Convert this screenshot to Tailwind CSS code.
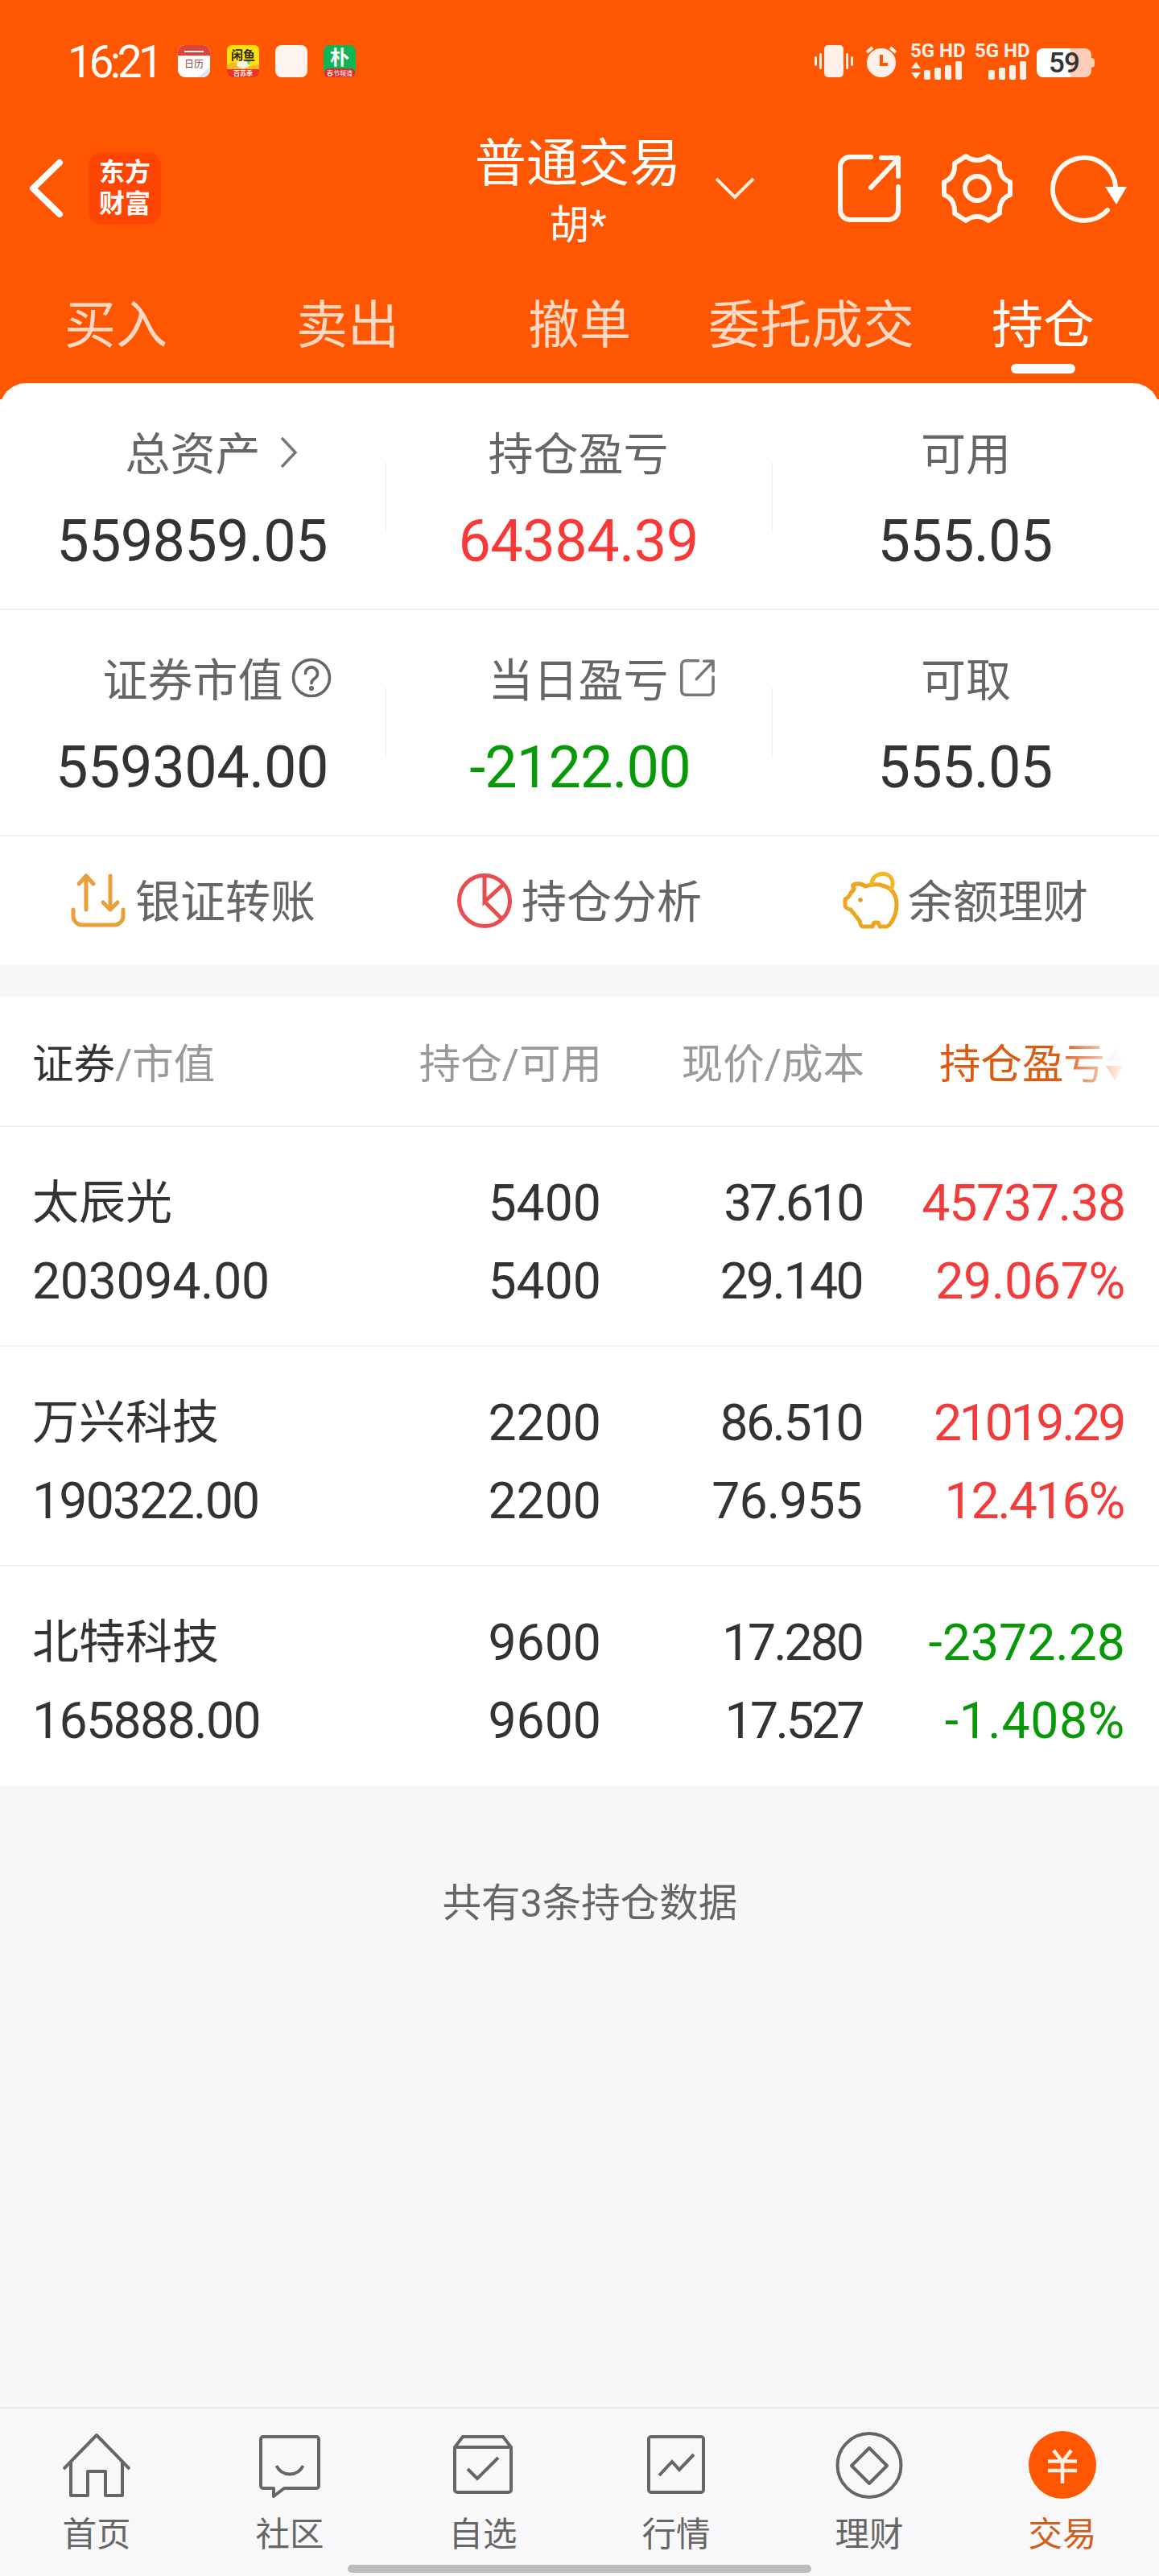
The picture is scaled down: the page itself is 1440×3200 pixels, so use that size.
<!DOCTYPE html>
<html lang="zh-CN">
  <head>
    <meta charset="UTF-8" />
    <meta name="viewport" content="width=device-width, initial-scale=1.0" />
    <title>普通交易 - 持仓</title>
    <script src="https://cdn.jsdelivr.net/npm/@tailwindcss/browser@4"></script>
  </head>
  <body class="bg-[#f6f7f9]">
    <div class="w-[1440px] h-[3200px] flex flex-col overflow-hidden font-['Roboto','Noto_Sans_CJK_SC',sans-serif] text-[#333]">

      <!-- 顶部 -->
      <header class="h-[496px] shrink-0 bg-[#ff5602] text-white">
        <!-- 状态栏 -->
        <div class="h-[152px] pl-[84px] pr-[80px] flex items-center">
          <div class="w-[137px] pt-[2px] text-[55px] leading-none tracking-[-4.5px]">16:21</div>
          <svg class="w-10 h-10" viewBox="0 0 40 40">
            <rect width="40" height="40" rx="9" fill="#fff" />
            <path d="M0 13V9a9 9 0 0 1 9-9h22a9 9 0 0 1 9 9v4z" fill="#dc4437" />
            <path d="M8 8h24" stroke="#fff" stroke-width="2" />
            <path d="M40 27v4a9 9 0 0 1-9 9h-6z" fill="#dfe5f1" />
            <text x="20" y="28" font-size="12" text-anchor="middle" fill="#8a4040" font-family="Noto Sans CJK SC">日历</text>
          </svg>
          <svg class="w-10 h-10 ml-[21px] overflow-visible" viewBox="0 0 40 40">
            <rect width="40" height="40" rx="6" fill="#fde010" />
            <path d="M0 24q10-5 20 0t20-1v8H0z" fill="#f7b52c" />
            <ellipse cx="20" cy="24" rx="8" ry="5" fill="#fff3d8" />
            <path d="M24 19l5 1-2 5z" fill="#46c99a" />
            <path d="M0 30h40v4a6 6 0 0 1-6 6H6a6 6 0 0 1-6-6z" fill="#ee3420" />
            <text x="20" y="18" font-size="15" font-weight="700" text-anchor="middle" fill="#2b2810" font-family="Noto Sans CJK SC">闲鱼</text>
            <text x="20" y="38" font-size="8" font-weight="700" text-anchor="middle" fill="#fff" font-family="Noto Sans CJK SC">百苏季</text>
          </svg>
          <div class="w-10 h-10 ml-5 rounded-[8px] bg-[#fff3ee]"></div>
          <svg class="w-10 h-10 ml-5 overflow-visible" viewBox="0 0 40 40">
            <rect width="40" height="40" rx="8" fill="#0fb457" />
            <rect x="1" y="29" width="38" height="11" rx="5" fill="#dc2b2b" />
            <text x="20" y="24" font-size="24" font-weight="700" text-anchor="middle" fill="#fff" font-family="Noto Sans CJK SC">朴</text>
            <text x="20" y="38" font-size="8" text-anchor="middle" fill="#fff" font-family="Noto Sans CJK SC">春节频道</text>
          </svg>

          <svg class="ml-auto w-12 h-10" viewBox="0 0 48 40" fill="#fff0e8">
            <rect x="12" width="24" height="40" rx="5" />
            <rect x="0" y="14" width="3" height="12" rx="1.5" /><rect x="6" y="10" width="3" height="20" rx="1.5" />
            <rect x="39" y="10" width="3" height="20" rx="1.5" /><rect x="45" y="14" width="3" height="12" rx="1.5" />
          </svg>
          <svg class="ml-[15px] w-10 h-10" viewBox="0 0 40 40">
            <circle cx="20" cy="22" r="18" fill="#fff0e8" />
            <path d="M2 9l7-6M38 9l-7-6" stroke="#fff0e8" stroke-width="4" />
            <path d="M20 12v12h8" fill="none" stroke="#ff5602" stroke-width="4" />
          </svg>
          <div class="ml-4 w-[65px] h-[46px] flex flex-col justify-between">
            <div class="text-[24px] leading-[20px] font-bold whitespace-pre text-[#fff0e8]">5G HD</div>
            <svg class="w-[65px] h-[23px]" viewBox="0 0 65 23" fill="#fff0e8">
              <path d="M1 9l6-8 6 8zM1 14h12l-6 8z" />
              <rect x="17" y="11" width="8" height="12" rx="2" /><rect x="30" y="8" width="8" height="15" rx="2" />
              <rect x="43" y="5" width="8" height="18" rx="2" /><rect x="56" y="0" width="8" height="23" rx="2" />
            </svg>
          </div>
          <div class="ml-[15px] w-[65px] h-[46px] flex flex-col justify-between">
            <div class="text-[24px] leading-[20px] font-bold whitespace-pre text-[#fff0e8]">5G HD</div>
            <svg class="w-[65px] h-[23px]" viewBox="0 0 65 23" fill="#fff0e8">
              <rect x="17" y="11" width="8" height="12" rx="2" /><rect x="30" y="8" width="8" height="15" rx="2" />
              <rect x="43" y="5" width="8" height="18" rx="2" /><rect x="56" y="0" width="8" height="23" rx="2" />
            </svg>
          </div>
          <div class="ml-3 mt-1 flex items-center">
            <div class="w-[68px] h-9 rounded-[8px] bg-linear-to-r from-white from-[62%] to-[#ffccb5] to-[62%] text-[#333] text-[35px] font-medium tracking-[-1px] leading-[37px] text-center">59</div>
            <div class="w-1 h-3 rounded-r bg-[#ffccb5]"></div>
          </div>
        </div>

        <!-- 标题栏 -->
        <div class="h-[180px] pl-[34px] pr-[38px] flex items-center">
          <div class="w-[556px] flex items-center gap-[30px] pb-[16px]">
            <svg class="w-[46px] h-[76px]" viewBox="0 0 46 76" fill="none" stroke="#fff" stroke-width="8" stroke-linecap="round" stroke-linejoin="round"><path d="M40 6L7 38l33 32" /></svg>
            <div class="w-[90px] h-[90px] rounded-[16px] bg-[#ff4503] flex flex-col items-center justify-center text-[32px] leading-[39px] font-bold">
              <span>东方</span><span>财富</span>
            </div>
          </div>
          <div class="w-[256px] flex flex-col items-center whitespace-nowrap">
            <div class="text-[64px] leading-[72px]">普通交易</div>
            <div class="text-[50px] leading-[72px] mt-1">胡*</div>
          </div>
          <div class="ml-auto flex items-center pb-[16px]">
            <svg class="w-[50px] h-[30px]" viewBox="0 0 50 30" fill="none" stroke="#fff0e0" stroke-width="4"><path d="M1 3l23 23L47 3" /></svg>
            <svg class="ml-[101px] w-[82px] h-[88px]" viewBox="0 0 82 88" fill="none" stroke="#fff8f0" stroke-width="6" stroke-linecap="round" stroke-linejoin="round">
              <path d="M42 5H16A12 12 0 0 0 4 17v54a12 12 0 0 0 12 12h48a12 12 0 0 0 12-12V42" />
              <path d="M55 6h21v23M75 8L42 43" />
            </svg>
            <svg class="ml-[47px] w-[90px] h-[88px]" viewBox="0 0 90 88" fill="none" stroke="#fff8f0" stroke-width="6" stroke-linejoin="round">
              <path d="M31 4q14 10 28 0l14 9q-1 18 13 23v16q-14 5-13 23l-14 9q-14-10-28 0l-14-9q1-18-13-23V36q14-5 13-23z" />
              <circle cx="45" cy="44" r="15" />
            </svg>
            <svg class="ml-[45px] w-[98px] h-[88px]" viewBox="0 0 98 88">
              <path d="M72 71A39 39 0 1 1 82 44" fill="none" stroke="#fff8f0" stroke-width="6" stroke-linecap="round" />
              <path d="M69 42h27L83 64z" fill="#fff" />
            </svg>
          </div>
        </div>

        <!-- 标签 -->
        <nav class="grid grid-cols-5 text-center text-[64px] leading-[80px] text-[#ffd9c4] pt-[33px]">
          <div>买入</div>
          <div>卖出</div>
          <div>撤单</div>
          <div>委托成交</div>
          <div class="text-white flex flex-col items-center">持仓<span class="mt-[7px] w-20 h-3 rounded-full bg-white"></span></div>
        </nav>
      </header>

      <!-- 资产汇总 -->
      <section class="-mt-5 shrink-0 bg-white rounded-t-[32px]">
        <div class="h-[282px] flex border-b-2 border-[#f0f0f0] text-center">
          <div class="w-[479px] pt-[59px]">
            <div class="text-[56px] leading-[60px] text-[#666]">
              <span class="relative">总资产<svg class="absolute left-[191px] top-[8px] w-6 h-[44px]" viewBox="0 0 24 44" fill="none" stroke="#777" stroke-width="3.5"><path d="M3 4l17 18L3 40" /></svg></span>
            </div>
            <div class="mt-[42px] pr-[2px] text-[72px] leading-[72px] tracking-[-0.7px]">559859.05</div>
          </div>
          <div class="w-px h-[88px] mt-[98px] bg-[#ededed]"></div>
          <div class="w-[479px] pt-[59px]">
            <div class="text-[56px] leading-[60px] text-[#666] pr-[2px]">持仓盈亏</div>
            <div class="mt-[42px] pr-[2px] text-[72px] leading-[72px] tracking-[-0.5px] text-[#f93838]">64384.39</div>
          </div>
          <div class="w-px h-[88px] mt-[98px] bg-[#ededed]"></div>
          <div class="w-[480px] pt-[59px]">
            <div class="text-[56px] leading-[60px] text-[#666]">可用</div>
            <div class="mt-[42px] pr-[2px] text-[72px] leading-[72px] tracking-[-0.7px]">555.05</div>
          </div>
        </div>
        <div class="h-[281px] flex border-b-2 border-[#f0f0f0] text-center">
          <div class="w-[479px] pt-[58px]">
            <div class="text-[56px] leading-[60px] text-[#666]">
              <span class="relative">证券市值<svg class="absolute left-[234px] top-[4px] w-[50px] h-[50px]" viewBox="0 0 50 50" fill="none" stroke="#666" stroke-width="3.6" stroke-linecap="round"><circle cx="25" cy="25" r="22.5" /><path d="M17.500 19.500a7.500 7.500 0 1 1 11.500 6.300q-4 2.500-4 6" /><circle cx="25" cy="38" r="1.300" /></svg></span>
            </div>
            <div class="mt-[42px] pr-[2px] text-[72px] leading-[72px] tracking-[-0.4px]">559304.00</div>
          </div>
          <div class="w-px h-[88px] mt-[96px] bg-[#ededed]"></div>
          <div class="w-[479px] pt-[58px]">
            <div class="text-[56px] leading-[60px] text-[#666] pr-[2px]">
              <span class="relative">当日盈亏<svg class="absolute left-[237px] top-[5px] w-[46px] h-[48px]" viewBox="0 0 82 88" fill="none" stroke="#777" stroke-width="6.500" stroke-linecap="round" stroke-linejoin="round"><path d="M42 5H14A10 10 0 0 0 4 15v58a10 10 0 0 0 10 10h52a10 10 0 0 0 10-10V42" /><path d="M55 6h21v23M75 8L38 47" /></svg></span>
            </div>
            <div class="mt-[42px] pl-[2px] text-[72px] leading-[72px] tracking-[-0.9px] text-[#089908]">-2122.00</div>
          </div>
          <div class="w-px h-[88px] mt-[96px] bg-[#ededed]"></div>
          <div class="w-[480px] pt-[58px]">
            <div class="text-[56px] leading-[60px] text-[#666]">可取</div>
            <div class="mt-[42px] pr-[2px] text-[72px] leading-[72px] tracking-[-0.7px]">555.05</div>
          </div>
        </div>
        <div class="h-[159px] grid grid-cols-3 text-[56px] leading-[60px] text-[#666]">
          <div class="flex items-center pl-[86px] gap-[10px]">
            <svg class="w-[72px] h-[72px]" viewBox="0 0 72 72" fill="none" stroke="#e9a03b" stroke-width="5" stroke-linecap="round" stroke-linejoin="round">
              <path d="M5 47v8a11 11 0 0 0 11 11h40a11 11 0 0 0 11-11v-8" />
              <path d="M21 47V5M12 15l9-10 9 10M51 5v42M42 38l9 9 9-9" />
            </svg>
            <span class="pt-[4px]">银证转账</span>
          </div>
          <div class="flex items-center pl-[86px] gap-[10px]">
            <svg class="w-[72px] h-[72px]" viewBox="0 0 72 72" fill="none" stroke="#e84e50" stroke-width="5">
              <circle cx="36" cy="36" r="31.500" />
              <path d="M36 4v33l24-22M36 37l22 22" />
            </svg>
            <span class="pt-[4px]">持仓分析</span>
          </div>
          <div class="flex items-center pl-[86px] gap-[10px]">
            <svg class="w-[72px] h-[72px]" viewBox="0 2 72 72" fill="none" stroke="#eca51e" stroke-width="5" stroke-linejoin="round">
              <path d="M14 18q9-3 15 2 9-3 18-2 21 4 21 25 0 14-9 25l-3 2h-9l-2-5h-5l-2 5h-12q-3 0-4-7l-11-14q-7-2-7-5v-8q6-3 7-8 5-4 4-6-2-2-1-4z" />
              <path d="M37 19C35 2 63-2 63 17q0 5-4 8" stroke="#f2b824" />
              <circle cx="23" cy="37" r="2.800" fill="#e59a2c" stroke="none" />
            </svg>
            <span class="pt-[4px]">余额理财</span>
          </div>
        </div>
      </section>

      <!-- 持仓列表 -->
      <section class="mt-10 shrink-0 bg-white text-[62.500px] leading-[97px]">
        <div class="h-[162px] pl-10 pr-[42px] pt-[8px] flex items-center border-b-2 border-[#f0f0f0] text-[51.500px] text-[#999]">
          <div class="w-[380px]"><span class="text-[#333]">证券</span>/市值</div>
          <div class="w-[328px] text-right">持仓/可用</div>
          <div class="w-[326px] text-right">现价/成本</div>
          <div class="relative flex-1 pl-[93px] flex items-center text-[#dd5a12] whitespace-nowrap">
            持仓盈亏
            <svg class="w-6 h-12 shrink-0" viewBox="0 0 24 48"><path d="M2 20L12 4l10 16z" fill="#ddd" /><path d="M1 26h22L12 44z" fill="#ff5602" /></svg>
            <div class="absolute right-[-10px] top-0 w-[90px] h-full bg-linear-to-r from-white/0 to-white to-[90%]"></div>
          </div>
        </div>

        <div class="h-[273px] pl-10 pr-[42px] pt-[46px] flex border-b-2 border-[#f0f0f0]">
          <div class="w-[380px]"><div class="text-[58px]">太辰光</div><div class="tracking-[-0.3px]">203094.00</div></div>
          <div class="w-[327px] text-right"><div>5400</div><div>5400</div></div>
          <div class="w-[324px] text-right"><div class="tracking-[-3.4px]">37.610</div><div class="tracking-[-2.6px]">29.140</div></div>
          <div class="flex-1 text-right text-[#f23c3c]"><div class="tracking-[-1.2px]">45737.38</div><div class="tracking-[-0.3px]">29.067%</div></div>
        </div>
        <div class="h-[273px] pl-10 pr-[42px] pt-[46px] flex border-b-2 border-[#f0f0f0]">
          <div class="w-[380px]"><div class="text-[58px]">万兴科技</div><div class="tracking-[-1.8px]">190322.00</div></div>
          <div class="w-[327px] text-right"><div>2200</div><div>2200</div></div>
          <div class="w-[324px] text-right"><div class="tracking-[-2.6px]">86.510</div><div class="tracking-[-0.9px]">76.955</div></div>
          <div class="flex-1 pr-[2px] text-right text-[#f23c3c]"><div class="tracking-[-3.3px]">21019.29</div><div class="tracking-[-2.2px]">12.416%</div></div>
        </div>
        <div class="h-[273px] pl-10 pr-[42px] pt-[46px] flex">
          <div class="w-[380px]"><div class="text-[58px]">北特科技</div><div class="tracking-[-1.6px]">165888.00</div></div>
          <div class="w-[327px] text-right"><div>9600</div><div>9600</div></div>
          <div class="w-[324px] text-right"><div class="tracking-[-3px]">17.280</div><div class="tracking-[-3.6px]">17.527</div></div>
          <div class="flex-1 text-right text-[#089908]"><div>-2372.28</div><div class="tracking-[0.6px]">-1.408%</div></div>
        </div>
      </section>

      <div class="pt-[114px] pl-[26px] text-center text-[48.500px] leading-[64px] text-[#666]">共有3条持仓数据</div>

      <!-- 底部导航 -->
      <footer class="mt-auto h-[210px] shrink-0 border-t-2 border-[#e6e7e9] bg-[#f8f8fa]">
        <div class="h-[184px] pt-[28px] grid grid-cols-6 text-center text-[42.500px] leading-[50px] text-[#666]">
          <div class="flex flex-col items-center gap-5">
            <svg class="w-[84px] h-[84px]" viewBox="0 0 84 84" fill="none" stroke="#666" stroke-width="4"><path d="M1 47L42 5l41 42M10 38v42h21V50h22v30h21V38" stroke-linejoin="round" /></svg>
            首页
          </div>
          <div class="flex flex-col items-center gap-5">
            <svg class="w-[84px] h-[84px]" viewBox="0 0 84 84" fill="none" stroke="#666" stroke-width="4" stroke-linejoin="round"><path d="M9 7h66a3 3 0 0 1 3 3v58a3 3 0 0 1-3 3H35L22 81V71H9a3 3 0 0 1-3-3V10a3 3 0 0 1 3-3z" /><path d="M25.500 43q5 10.500 16.500 10.500T58.500 43" /></svg>
            社区
          </div>
          <div class="flex flex-col items-center gap-5">
            <svg class="w-[84px] h-[84px]" viewBox="0 0 84 84" fill="none" stroke="#666" stroke-width="4" stroke-linejoin="round"><path d="M7 20L17 7h50l10 13v53a3 3 0 0 1-3 3H10a3 3 0 0 1-3-3zM7 20h70" /><path d="M23 47l12 12 26-26" stroke-linejoin="miter" /></svg>
            自选
          </div>
          <div class="flex flex-col items-center gap-5">
            <svg class="w-[84px] h-[84px]" viewBox="0 0 84 84" fill="none" stroke="#666" stroke-width="4"><rect x="8" y="7" width="68" height="69" rx="3" /><path d="M21 55l16-17 9 10 18-19" /></svg>
            行情
          </div>
          <div class="flex flex-col items-center gap-5">
            <svg class="w-[84px] h-[84px]" viewBox="0 0 84 84" fill="none" stroke="#666" stroke-width="4" stroke-linejoin="round"><circle cx="42" cy="42.500" r="39.500" /><path d="M42 21l22 22-22 22-22-22z" /></svg>
            理财
          </div>
          <div class="flex flex-col items-center gap-5 text-[#cf5f1c]">
            <svg class="w-[84px] h-[84px]" viewBox="0 0 84 84" fill="none" stroke="#fff0e4" stroke-width="4.500"><circle cx="42" cy="42" r="42" fill="#ff5602" stroke="none" /><path d="M31 24l11 14 11-14M24 37.500h36M24 49h36M42 37v28" /></svg>
            交易
          </div>
        </div>
        <div class="mt-[10px] mx-auto w-[576px] h-[10px] rounded-full bg-[#bcbcbd]"></div>
      </footer>
    </div>
  </body>
</html>
